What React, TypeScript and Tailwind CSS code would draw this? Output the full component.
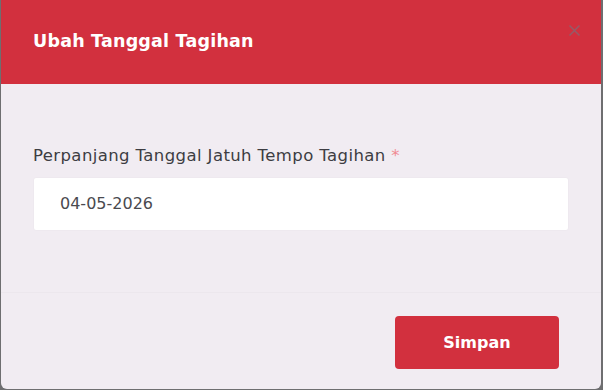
import React from 'react';

const App: React.FC = () => {
  return (
    <div
      className="w-[603px] h-[390px] bg-[#6e6e70] overflow-hidden flex justify-center"
      style={{ fontFamily: '"DejaVu Sans", "Noto Sans", sans-serif' }}
    >
      <div className="w-[600px] h-[389px] ml-[1px] mr-[2px] flex flex-col bg-[#f1ecf2] rounded-b-[6px] overflow-hidden">
        <div className="h-[84px] shrink-0 bg-[#d2303e] flex items-center justify-between pl-[32px] pr-[20px] pb-[2px]">
          <h2 className="text-white font-bold text-[17.5px] tracking-[0.2px]">Ubah Tanggal Tagihan</h2>
          <button className="self-start mt-[24px] text-[#8a6470] opacity-80">
            <svg width="13" height="13" viewBox="0 0 13 13" fill="none" stroke="currentColor" strokeWidth="1.6">
              <path d="M1.5 1.5l10 10M11.5 1.5l-10 10" />
            </svg>
          </button>
        </div>

        <div className="flex-1 px-[32px] pt-[61px]">
          <label className="block text-[16.5px] leading-[22px] tracking-[0.4px] text-[#3d3d42] mb-[10px]">
            Perpanjang Tanggal Jatuh Tempo Tagihan <span className="text-[#f08a92]">*</span>
          </label>
          <div className="h-[54px] bg-white rounded-[3px] border border-[#eee9ef] flex items-center pl-[26px] text-[16px] text-[#4a4a4f]">
            04-05-2026
          </div>
        </div>

        <div className="h-[97px] shrink-0 border-t border-[#ece7ed] flex items-start justify-end pr-[42px] pt-[23px]">
          <button className="w-[164px] h-[53px] bg-[#d2303e] rounded-[4px] text-white font-bold text-[16px]">
            Simpan
          </button>
        </div>
      </div>
    </div>
  );
};

export default App;
